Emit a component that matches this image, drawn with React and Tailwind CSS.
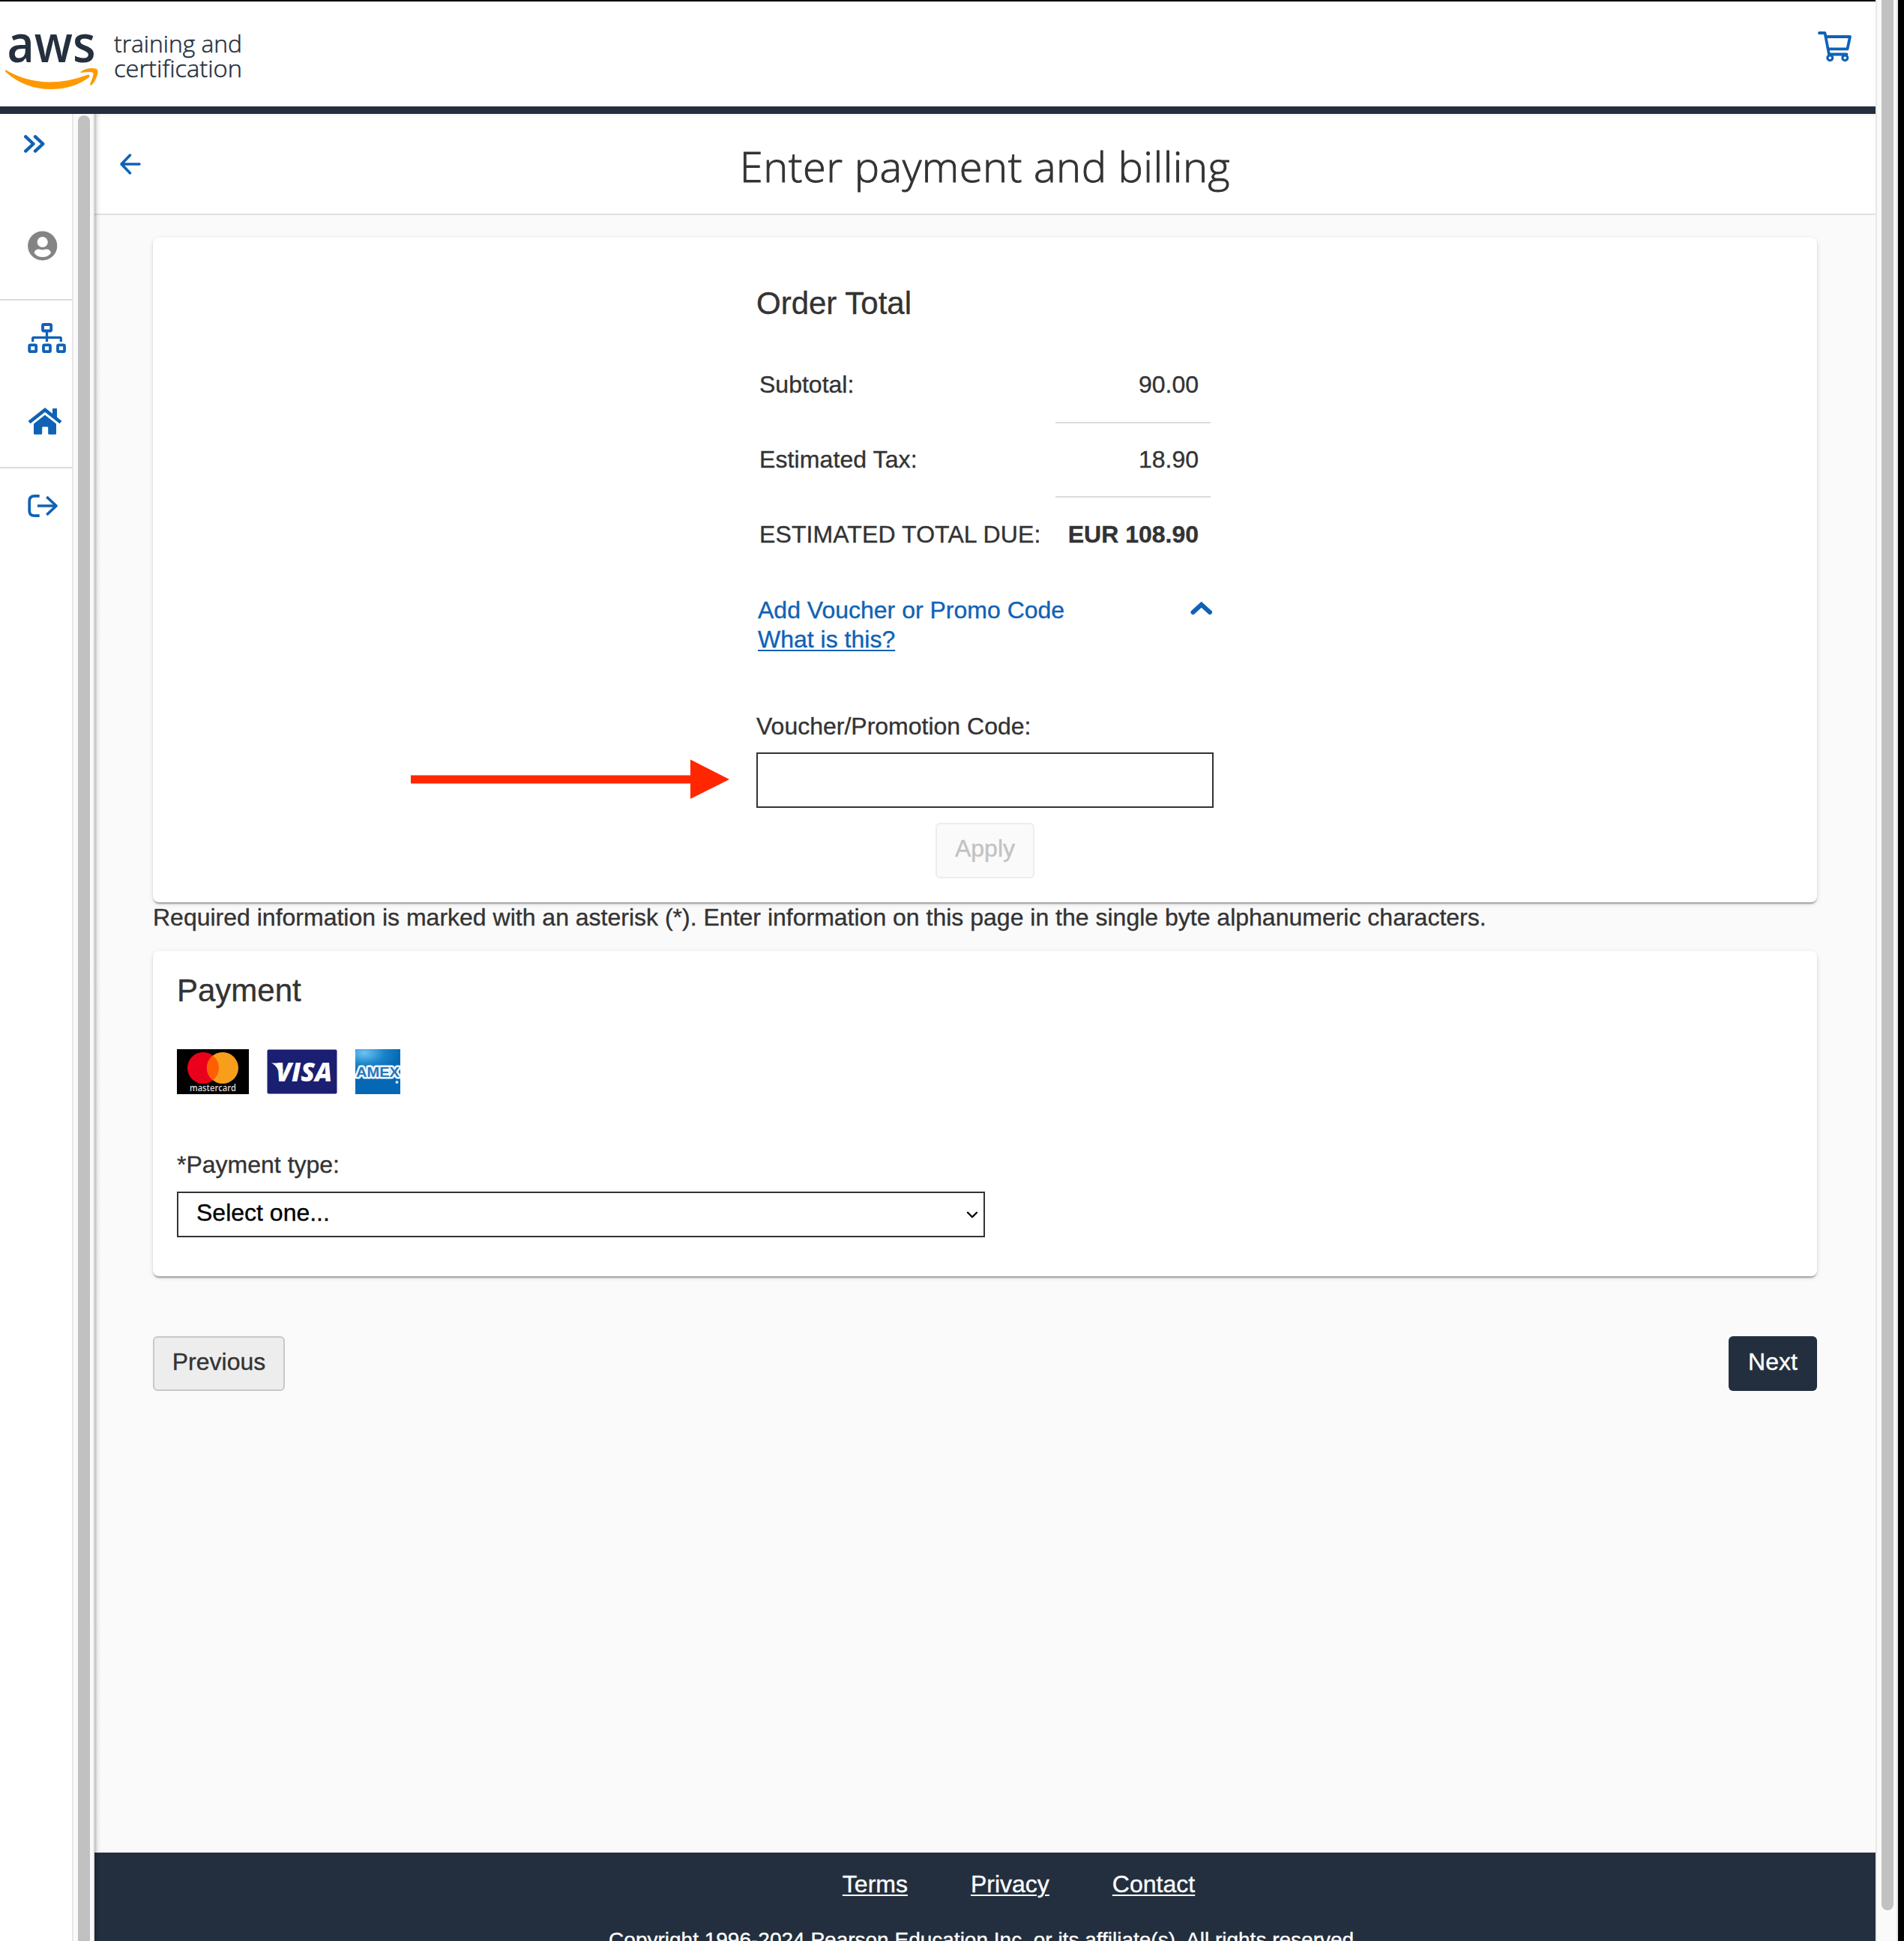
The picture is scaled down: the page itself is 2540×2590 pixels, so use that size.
import React from "react";

function AwsLogo() {
  return (
    <svg width="340" height="100" viewBox="0 30 340 100" className="block">
      <text x="9.500" y="82.500" textLength="118" lengthAdjust="spacingAndGlyphs" fontFamily="Open Sans" fontWeight="600" fontSize="69" fill="#252f3e">aws</text>
      <path d="M8 93.500Q34 109 66 109.500Q92 109.500 116 100Q121 99 119 103Q98 119 68 119Q33 119 7.500 96Q6 93 8 93.500Z" fill="#ff9900" />
      <path d="M107.500 96Q117 89 129 92Q133 95 127 107Q123 114 121 114Q119.500 114 121 110Q126 98 124 97Q121 95 108.500 97Q106.500 97 107.500 96Z" fill="#ff9900" />
      <text x="152" y="69.500" textLength="171" lengthAdjust="spacingAndGlyphs" fontFamily="Open Sans" fontWeight="300" fontSize="32" fill="#252f3e" stroke="#252f3e" strokeWidth="0.500">training and</text>
      <text x="152" y="102.500" textLength="171" lengthAdjust="spacingAndGlyphs" fontFamily="Open Sans" fontWeight="300" fontSize="32" fill="#252f3e" stroke="#252f3e" strokeWidth="0.500">certification</text>
    </svg>
  );
}

function CartIcon() {
  return (
    <svg width="46" height="42" viewBox="0 0 46 42" fill="none" stroke="#0f62b5" strokeWidth="4" strokeLinecap="round" strokeLinejoin="round">
      <path d="M2 2H9.500L15 30.500H38.500" strokeWidth="3.800" />
      <path d="M11 7H43L39.500 23.300H14" strokeWidth="3.800" />
      <circle cx="16.300" cy="35.200" r="3.400" strokeWidth="3.200" />
      <circle cx="36.300" cy="35.200" r="3.400" strokeWidth="3.200" />
    </svg>
  );
}

function Sidebar() {
  return (
    <nav className="flex w-[96px] shrink-0 flex-col bg-white text-[#0f62b5]">
      <div className="box-content h-[219px] border-b-2 border-[#dcdcdc] pt-7">
        <svg width="96" height="24" viewBox="0 0 96 24" className="block h-[24px]" fill="none" stroke="currentColor" strokeWidth="4.400" strokeLinecap="round" strokeLinejoin="round">
          <path d="M34.200 2.400L44.500 12L34.200 21.600M47 2.400L57.300 12L47 21.600" />
        </svg>
        <svg width="96" height="40" viewBox="0 0 96 40" className="mt-[104px] block">
          <circle cx="56.700" cy="20" r="19.600" fill="#848484" />
          <circle cx="56.700" cy="15" r="7.100" fill="#fff" />
          <path d="M45.600 29.500Q46.500 24.600 52 24.600Q54.500 25.400 56.700 25.400Q59 25.400 61.500 24.600Q67 24.600 68 29.500Q64 35 56.700 35Q49.500 35 45.600 29.500Z" fill="#fff" />
        </svg>
      </div>
      <div className="box-content h-[194px] border-b-2 border-[#dcdcdc] pt-[28px]">
        <svg width="96" height="44" viewBox="0 429 96 44" className="block" fill="none" stroke="currentColor" strokeWidth="3.800">
          <rect x="57" y="433" width="11.200" height="8.500" rx="1.500" />
          <rect x="39.200" y="460.400" width="9" height="8.800" rx="1.500" />
          <rect x="58" y="460.400" width="9" height="8.800" rx="1.500" />
          <rect x="77" y="460.400" width="9" height="8.800" rx="1.500" />
          <path d="M43.700 456V451.500Q43.700 450.300 45 450.300H80Q81.300 450.300 81.300 451.500V456M62.500 442V456" strokeWidth="3.300" />
        </svg>
        <svg width="96" height="44" viewBox="0 540 96 44" className="mt-[67px] block">
          <path d="M39 563.500L60 547L81 563.500" fill="none" stroke="currentColor" strokeWidth="4.600" />
          <path d="M70 545.500Q70 545 70.500 545H75.500Q76 545 76 545.500V558L70 553Z" fill="currentColor" />
          <path d="M60 553.800L75 565.500V578.500Q75 579.700 73.800 579.700H65.300Q64.200 579.700 64.200 578.600V570.500Q64.200 569.500 63.200 569.500H57.200Q56.200 569.500 56.200 570.500V578.600Q56.200 579.700 55 579.700H46.200Q45 579.700 45 578.500V565.500Z" fill="currentColor" />
        </svg>
      </div>
      <svg width="96" height="40" viewBox="0 655 96 40" className="mt-[30px] block" fill="none" stroke="currentColor" strokeWidth="3.700">
        <path d="M52.700 661.800H46Q39.200 661.800 39.200 668.500V681.500Q39.200 688.200 46 688.200H52.700M50 675H75" />
        <path d="M62.300 663L75 675L62.300 687" strokeLinejoin="round" />
      </svg>
    </nav>
  );
}

function CardLogos() {
  return (
    <div className="mt-[53px] flex h-[60px]">
      <svg width="96" height="60" viewBox="0 0 96 60">
        <rect width="96" height="60" fill="#000" />
        <circle cx="35" cy="25" r="21" fill="#eb001b" />
        <circle cx="61" cy="25" r="21" fill="#f79e1b" />
        <path d="M48 8.500A21 21 0 0 1 48 41.500A21 21 0 0 1 48 8.500Z" fill="#ff5f00" />
        <text x="17" y="55.500" textLength="62" lengthAdjust="spacingAndGlyphs" fontFamily="Open Sans" fontWeight="600" fontSize="12" fill="#ddd">mastercard</text>
      </svg>
      <svg width="94" height="60" viewBox="0 0 94 60" className="ml-6">
        <rect x="0.500" y="0.500" width="93" height="59" rx="2" fill="#1a1f71" />
        <path d="M6 18.500H17L22 29L15 28Q12 21 6 18.500Z" fill="#fff" />
        <text x="12" y="43" textLength="75" lengthAdjust="spacingAndGlyphs" fontFamily="Open Sans" fontWeight="800" fontStyle="italic" fontSize="35" fill="#fff">VISA</text>
      </svg>
      <svg width="60" height="60" viewBox="0 0 60 60" className="ml-6">
        <defs>
          <radialGradient id="amexGlow" cx="0.200" cy="0.150" r="0.800">
            <stop offset="0" stopColor="#6cc4f0" />
            <stop offset="0.550" stopColor="#1c84cb" />
            <stop offset="1" stopColor="#0568b4" />
          </radialGradient>
        </defs>
        <rect width="60" height="60" fill="#0568b4" />
        <rect width="60" height="34" fill="url(#amexGlow)" />
        <text x="1" y="36.500" textLength="58" lengthAdjust="spacingAndGlyphs" fontFamily="Liberation Sans" fontWeight="700" fontSize="18.500" fill="#2477bb" stroke="#eef6fc" strokeWidth="5" strokeLinejoin="round" paintOrder="stroke">AMEX</text>
        <circle cx="55.500" cy="44" r="2" fill="#cfe6f5" />
      </svg>
    </div>
  );
}

const cardClass =
  "rounded-lg bg-white shadow-[0_4px_2px_-2px_rgba(0,0,0,0.2),0_2px_2px_0_rgba(0,0,0,0.14),0_2px_6px_0_rgba(0,0,0,0.12)]";

function OrderCard() {
  return (
    <section className={`relative h-[887px] pt-[63px] ${cardClass}`}>
      <div className="mx-auto w-[610px]">
        <h2 className="text-[42px] leading-[50px]">Order Total</h2>
        <div className="mt-[33px] pl-1 pr-[4px]">
          <div className="flex justify-between">
            <span className="pt-[30px]">Subtotal:</span>
            <span className="w-[207px] border-b-2 border-[#dcdcdc] pb-[30px] pr-4 pt-[30px] text-right">90.00</span>
          </div>
          <div className="flex justify-between">
            <span className="pt-[28px] tracking-[0.1px]">Estimated Tax:</span>
            <span className="w-[207px] border-b-2 border-[#dcdcdc] pb-[29px] pr-4 pt-[28px] text-right">18.90</span>
          </div>
          <div className="flex justify-between pt-[29px]">
            <span className="whitespace-nowrap tracking-[0.1px]">ESTIMATED TOTAL DUE:</span>
            <span className="whitespace-nowrap pr-4 font-bold">EUR 108.90</span>
          </div>
        </div>
        <div className="mt-[62px] flex justify-between pl-[2px] text-[#0f62b5]">
          <div className="leading-[39px]">
            <div>Add Voucher or Promo Code</div>
            <a className="underline decoration-2 underline-offset-[3px]">What is this?</a>
          </div>
          <svg width="32" height="22" viewBox="0 0 32 22" className="mr-px mt-[6px]" fill="none" stroke="currentColor" strokeWidth="6" strokeLinecap="round" strokeLinejoin="miter">
            <path d="M5.500 16L16.700 5.700L28 16" />
          </svg>
        </div>
        <label className="mt-[76px] block">Voucher/Promotion Code:</label>
        <input className="mt-[15px] block h-[74px] w-full border-2 border-[#333] bg-white outline-none" />
        <button className="mx-auto mt-5 block h-[74px] w-[132px] rounded-md border-2 border-[#ededed] bg-[#fafafa] pb-[6px] text-[#c2c2c2]">Apply</button>
      </div>
      <svg width="426" height="54" viewBox="0 0 426 54" className="absolute left-[344px] top-[696px]">
        <path d="M0 21.500H373V0.500L425 27L373 53V32.500H0Z" fill="#ff2600" />
      </svg>
    </section>
  );
}

function PaymentCard() {
  return (
    <section className={`mt-[25px] h-[434px] px-8 pt-[28px] ${cardClass}`}>
      <h2 className="text-[42px] leading-[50px]">Payment</h2>
      <CardLogos />
      <label className="mt-[74px] block">*Payment type:</label>
      <div className="mt-4 flex h-[61px] w-[1078px] items-center justify-between border-2 border-[#333] pl-6 pr-[7px] text-black">
        <span className="pb-[5px]">Select one...</span>
        <svg width="16" height="12" viewBox="0 0 16 12" fill="none" stroke="#000" strokeWidth="2.400" strokeLinecap="round" strokeLinejoin="round">
          <path d="M2 3L8 9L14 3" />
        </svg>
      </div>
    </section>
  );
}

export default function App() {
  return (
    <div className="flex h-[2590px] w-[2540px] overflow-hidden bg-black font-['Liberation_Sans',Arial,sans-serif] text-[32px] leading-[40px] text-[#333] [-webkit-text-stroke:0.35px_currentColor]">
      <div className="flex w-[2502px] flex-col bg-white">
        <header className="flex h-[152px] shrink-0 justify-between border-b-[10px] border-t-2 border-b-[#232f3e] border-t-black pr-[31px]">
          <div className="pt-7"><AwsLogo /></div>
          <div className="pt-10"><CartIcon /></div>
        </header>
        <div className="flex min-h-0 flex-1">
          <Sidebar />
          <div className="w-[30px] shrink-0 border-x-2 border-[#e8e8e8] bg-[#fafafa] pt-[2px]">
            <div className="ml-[6px] h-[2500px] w-4 rounded-full bg-[#c1c1c1]" />
          </div>
          <main className="relative flex flex-1 flex-col bg-[#fafafa]">
            <div className="relative flex h-[135px] shrink-0 items-center justify-center border-b-2 border-[#e0e0e0] bg-white shadow-[inset_0_5px_3px_-1px_#f7f7f7]">
              <svg width="30" height="32" viewBox="0 0 30 32" className="absolute left-[33px] top-[51px]" fill="none" stroke="#0f62b5" strokeWidth="3.500" strokeLinecap="round" strokeLinejoin="round">
                <path d="M14.500 4L3 16L14.500 28M3 16H27" />
              </svg>
              <h1 className="whitespace-nowrap pt-[4px] font-['Open_Sans'] text-[56px] font-light leading-[76px] tracking-[0.5px] [-webkit-text-stroke:0.9px_#333]">Enter payment and billing</h1>
            </div>
            <div className="flex-1 px-[78px] pt-[30px]">
              <OrderCard />
              <p>Required information is marked with an asterisk (*). Enter information on this page in the single byte alphanumeric characters.</p>
              <PaymentCard />
              <div className="mt-20 flex justify-between">
                <button className="h-[73px] w-[176px] rounded-md border-2 border-[#c8c8c8] bg-[#ededed] pb-[5px]">Previous</button>
                <button className="h-[73px] w-[118px] rounded-md bg-[#232f3e] pb-[5px] text-white">Next</button>
              </div>
            </div>
            <footer className="h-[118px] shrink-0 overflow-hidden bg-[#232f3e] pt-[22px] text-white">
              <div className="flex justify-center gap-[84px] pl-[90px]">
                <a className="underline decoration-2 underline-offset-[3px]">Terms</a>
                <a className="underline decoration-2 underline-offset-[3px]">Privacy</a>
                <a className="underline decoration-2 underline-offset-[3px]">Contact</a>
              </div>
              <p className="mt-[35px] whitespace-nowrap pr-0.5 text-center text-[28px]">Copyright 1996-2024 Pearson Education Inc. or its affiliate(s). All rights reserved.</p>
            </footer>
            <div className="pointer-events-none absolute inset-y-0 left-0 w-[9px] bg-gradient-to-r from-black/25 via-black/5 to-transparent" />
          </main>
        </div>
      </div>
      <div className="w-[30px] border-x-2 border-[#e8e8e8] bg-[#fafafa]">
        <div className="ml-[6px] h-[2549px] w-4 rounded-b-full bg-[#c1c1c1]" />
      </div>
    </div>
  );
}
